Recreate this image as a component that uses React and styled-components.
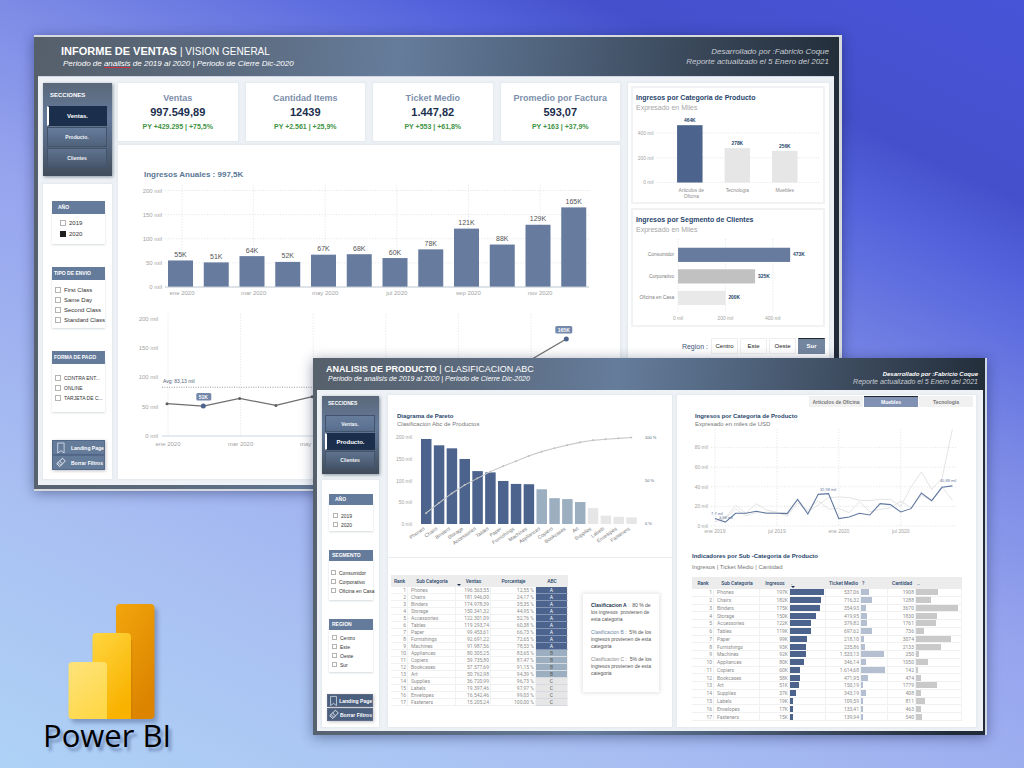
import React from "react";
import styled, { createGlobalStyle, css } from "styled-components";

const Global = createGlobalStyle`
  *, *::before, *::after { box-sizing: border-box; }
  body { margin: 0; font-family: "Liberation Sans", Arial, sans-serif; }
  h1, h2, h3, h4, p, ul, fieldset { margin: 0; padding: 0; border: 0; min-width: 0; }
  button { font-family: inherit; padding: 0; margin: 0; border: 0; cursor: pointer; }
  svg { display: block; }
`;

const c = {
  navy: "#1b2f4d",
  ink: "#27456b",
  bar: "#4b638d",
  slate: "#677b9e",
  mist: "#9bafc1",
  pale: "#e6e6e6",
  grid: "#dcdfe3",
  axis: "#a3a3a3",
};

const Desktop = styled.main`
  position: relative;
  min-height: 100vh;
  overflow: hidden;
  background: linear-gradient(25deg, #aed2f6 0%, #a9bff2 23%, #96a4ee 48%, #7d8be6 62%, #5564dc 77%, #4450cb 84%, #4854d8 100%);
`;

/* ---------- report windows ---------- */

const frame = "linear-gradient(96deg, #56606b 0%, #5b6a7d 22%, #657c9b 43%, #50647d 60%, #3c4a5d 76%, #212c38 96%)";

const Report = styled.article`
  position: absolute;
  background: ${frame};
  box-shadow: 0 2px 12px rgba(20, 30, 70, 0.45);
`;

const SalesReport = styled(Report)`
  top: 35px;
  left: 34px;
  right: 182px;
  padding: 0 5px 4px 4px;
  border: solid #d6dadf;
  border-width: 2px 3px 2px 0;
  background-clip: padding-box;
`;

const ProductReport = styled(Report)`
  top: 358px;
  left: 313px;
  right: 37px;
  padding: 0 2px 4px 4px;
  border-right: 2px solid #cfd6e6;
`;

const Header = styled.header`
  display: flex;
  justify-content: space-between;
  color: #fff;
  height: ${(p) => (p.$small ? 32 : 39)}px;
  padding: ${(p) => (p.$small ? "6px 5px 0 9px" : "8px 5px 0 23px")};
`;

const Title = styled.h1`
  font-size: ${(p) => (p.$small ? 9 : 11)}px;
  line-height: ${(p) => (p.$small ? 10 : 12)}px;
  white-space: nowrap;
  span {
    font-weight: 400;
    font-size: ${(p) => (p.$small ? 9 : 10)}px;
  }
`;

const Period = styled.p`
  font-size: ${(p) => (p.$small ? 7 : 8)}px;
  line-height: ${(p) => (p.$small ? 9 : 12)}px;
  padding-left: 2px;
  font-style: italic;
  white-space: nowrap;
  u { text-decoration: underline #d03040; }
`;

const Credits = styled.p`
  text-align: right;
  font-style: italic;
  white-space: nowrap;
  color: #c9cdd3;
  font-size: ${(p) => (p.$small ? 7 : 8)}px;
  line-height: ${(p) => (p.$small ? 7 : 10)}px;
  padding-top: ${(p) => (p.$small ? 6 : 2)}px;
  b {
    font-size: ${(p) => (p.$small ? 6 : 8)}px;
    font-weight: ${(p) => (p.$small ? 700 : 400)};
    color: ${(p) => (p.$small ? "#fff" : "inherit")};
  }
`;

const SalesBody = styled.div`
  display: grid;
  grid-template-columns: 69px minmax(0, 502fr) minmax(0, 203fr);
  column-gap: 6px;
  background: #eef2f6;
  padding: 6px 5px 6px;
  border-top: 1px solid #cfd8e2;
`;

const ProductBody = styled.div`
  display: grid;
  grid-template-columns: 57px minmax(0, 288fr) minmax(0, 299fr);
  column-gap: 5px;
  background: #eef2f6;
  padding: 5px 7px 4px 5px;
`;

const Side = styled.aside`
  display: flex;
  flex-direction: column;
  gap: ${(p) => (p.$small ? 6 : 8)}px;
  padding-top: ${(p) => (p.$small ? 1 : 0)}px;
`;

const Panel = styled.section`
  background: #fff;
  box-shadow: 0 0 2px 1px #e2e8ee;
`;

/* ---------- navigation ---------- */

const Nav = styled.nav`
  display: flex;
  flex-direction: column;
  gap: 1px;
  background: linear-gradient(180deg, #5a6879 0%, #64799a 38%, #566880 65%, #414c5a 100%);
  box-shadow: 1px 1px 3px rgba(40, 55, 80, 0.5);
  padding: ${(p) => (p.$small ? "4px 4px 6px 3px" : "8px 5px 8px 4px")};
  h2 {
    color: #fff;
    font-size: ${(p) => (p.$small ? 5 : 6)}px;
    line-height: ${(p) => (p.$small ? 7 : 8)}px;
    padding-left: 3px;
    margin-bottom: ${(p) => (p.$small ? 7 : 6)}px;
  }
`;

const NavButton = styled.button`
  height: ${(p) => (p.$small ? 17 : 20)}px;
  color: #f0f3f7;
  font-size: 5px;
  font-weight: 700;
  background: linear-gradient(180deg, rgba(110, 135, 170, 0.45), rgba(70, 90, 120, 0.35));
  border: 1px solid #42536c;
  ${(p) =>
    p.$active &&
    css`
      background: ${c.navy};
      border-color: ${c.navy};
      border-left: 2px solid #fff;
      color: #fff;
      font-size: 6px;
    `}
`;

/* ---------- slicers ---------- */

const Slicers = styled(Panel)`
  flex: 1;
  display: flex;
  flex-direction: column;
  gap: ${(p) => (p.$small ? 19 : 23)}px;
  padding: ${(p) => (p.$small ? "14px 6px 6px 7px" : "17px 7px 9px 9px")};
`;

const Slicer = styled.fieldset`
  box-shadow: 0 1px 2px #d5d9de;
  padding-bottom: ${(p) => p.$bottom}px;
`;

const SlicerHead = styled.legend`
  display: block;
  width: 100%;
  background: #657b9b;
  color: #fff;
  font-weight: 700;
  font-size: 5px;
  padding: 0 0 0 ${(p) => p.$indent}px;
  height: ${(p) => (p.$small ? 11 : 13)}px;
  line-height: ${(p) => (p.$small ? 11 : 13)}px;
  margin-bottom: ${(p) => p.$gap}px;
  white-space: nowrap;
`;

const Option = styled.label`
  display: flex;
  align-items: center;
  gap: 3px;
  height: ${(p) => p.$row}px;
  padding-left: ${(p) => p.$indent}px;
  font-size: ${(p) => p.$size}px;
  color: #333;
  white-space: nowrap;
`;

const Tick = styled.input`
  appearance: none;
  margin: 0;
  flex: none;
  width: ${(p) => (p.$small ? 5 : 6)}px;
  height: ${(p) => (p.$small ? 5 : 6)}px;
  border: 1px solid #b4b4b0;
  background: #fff;
  &:checked { background: #1f1f1f; border-color: #1f1f1f; }
`;

const Actions = styled.div`
  margin: auto 0 0 ${(p) => (p.$small ? -2 : 0)}px;
  display: flex;
  flex-direction: column;
  gap: ${(p) => (p.$small ? 1 : 0)}px;
`;

const Action = styled.button`
  display: flex;
  align-items: center;
  gap: ${(p) => (p.$small ? 1 : 5)}px;
  height: ${(p) => (p.$small ? 13 : 15)}px;
  padding-left: ${(p) => (p.$small ? 1 : 3)}px;
  background: ${(p) => (p.$small ? "#4b5f7f" : "#647b9a")};
  border: 1px solid ${(p) => (p.$small ? "#5d6d87" : "#53698a")};
  color: #fff;
  font-size: 5px;
  font-weight: 700;
  white-space: nowrap;
  box-shadow: 1px 1px 3px rgba(60, 60, 80, 0.3);
`;

const BookmarkIcon = () => (
  <svg width="10" height="12" viewBox="0 0 10 12" fill="none" stroke="#dfe6ef" strokeWidth="0.8">
    <path d="M1.700 1h6.400v10L4.900 8.600 1.700 11z" />
  </svg>
);

const EraserIcon = () => (
  <svg width="10" height="11" viewBox="0 0 11 11" fill="none" stroke="#fff" strokeWidth="0.9">
    <path d="M7.200 0.800 10.200 3.800 4.200 10 0.800 6.800zM4 3.900 7.200 7M2.300 5.600 5.400 8.700" />
  </svg>
);

function Filter({ name, options, checked, small, row = 10, size = 6, indent = 3, headIndent = 2, gap, bottom }) {
  return (
    <Slicer $bottom={bottom}>
      <SlicerHead $small={small} $gap={gap} $indent={headIndent}>{name}</SlicerHead>
      {options.map((o) => (
        <Option key={o} $row={row} $size={size} $indent={indent}>
          <Tick type="checkbox" $small={small} defaultChecked={o === checked} />
          {o}
        </Option>
      ))}
    </Slicer>
  );
}

function Sections({ active, small }) {
  return (
    <Nav $small={small}>
      <h2>SECCIONES</h2>
      {["Ventas.", "Producto.", "Clientes"].map((s) => (
        <NavButton key={s} $small={small} $active={s === active}>{s}</NavButton>
      ))}
    </Nav>
  );
}

function FilterActions({ small }) {
  return (
    <Actions $small={small}>
      <Action $small={small}><BookmarkIcon />Landing Page</Action>
      <Action $small={small}><EraserIcon />Borrar Filtros</Action>
    </Actions>
  );
}

/* ---------- chart helpers ---------- */

const Plot = styled.svg`
  width: 100%;
  height: auto;
  font-family: "Liberation Sans", Arial, sans-serif;
`;

const T = ({ x, y, size = 5, fill = c.axis, anchor = "middle", bold, children, ...rest }) => (
  <text x={x} y={y} dy="0.35em" fontSize={size} fill={fill} textAnchor={anchor} fontWeight={bold ? 700 : 400} {...rest}>
    {children}
  </text>
);

const Dash = ({ x1, y1, x2, y2, stroke = c.grid }) => (
  <line x1={x1} y1={y1} x2={x2} y2={y2} stroke={stroke} strokeWidth="0.8" strokeDasharray="1.2 1.6" />
);

const monthly = [55, 51, 64, 52, 67, 68, 60, 78, 121, 88, 129, 165];
const monthTicks = ["ene 2020", "mar 2020", "may 2020", "jul 2020", "sep 2020", "nov 2020"];

function AnnualBars() {
  const base = 107;
  const k = 0.4825;
  return (
    <Plot viewBox="0 0 502 124" role="img" aria-label="Ingresos Anuales">
      {[0, 50, 100, 150, 200].map((v) => (
        <g key={v}>
          <T x={44} y={base - v * k} size={6} anchor="end">{v} mil</T>
          <Dash x1={47} x2={471} y1={base - v * k} y2={base - v * k} />
        </g>
      ))}
      {monthTicks.map((m, i) => (
        <g key={m}>
          <Dash x1={64 + i * 71.6} x2={64 + i * 71.6} y1={5} y2={base} />
          <T x={64 + i * 71.6} y={base + 6} size={6}>{m}</T>
        </g>
      ))}
      {monthly.map((v, i) => (
        <g key={i}>
          <rect x={50 + i * 35.75} y={base - v * k} width={25} height={v * k} fill={c.slate} />
          <T x={62.5 + i * 35.75} y={base - v * k - 6} size={7} fill="#555">{v}K</T>
        </g>
      ))}
      <line x1={47} x2={471} y1={base} y2={base} stroke="#c2ccd6" />
    </Plot>
  );
}

function MonthlyLine() {
  const base = 132;
  const k = 0.5875;
  const px = (i) => 49 + i * 36.3;
  const py = (v) => base - v * k;
  return (
    <Plot viewBox="0 0 502 156" role="img" aria-label="Ingresos por mes">
      {[0, 50, 100, 150, 200].map((v) => (
        <T key={v} x={40} y={py(v)} size={6} anchor="end">{v} mil</T>
      ))}
      {monthTicks.map((m, i) => (
        <g key={m}>
          <Dash x1={50 + i * 72.6} x2={50 + i * 72.6} y1={10} y2={base} />
          <T x={50 + i * 72.6} y={base + 8} size={6}>{m}</T>
        </g>
      ))}
      <line x1={44} x2={476} y1={base} y2={base} stroke="#cdd8e2" strokeWidth="1.2" />
      <line x1={44} x2={476} y1={py(83)} y2={py(83)} stroke="#9a9a9a" strokeDasharray="1 1.4" />
      <T x={45} y={py(83) - 6} size={5} fill="#4d6078" anchor="start">Avg: 83,13 mil</T>
      <polyline points={monthly.map((v, i) => `${px(i)},${py(v)}`).join(" ")} fill="none" stroke="#6f6f6f" strokeWidth="1.3" />
      {monthly.map((v, i) => {
        const flag = i === 1 || i === 11;
        return (
          <g key={i}>
            <circle cx={px(i)} cy={py(v)} r={flag ? 2.5 : 1.5} fill={flag ? c.bar : "#5e5e5e"} />
            {flag && (
              <>
                <rect x={px(i) - (i === 1 ? 7 : 11)} y={py(v) - 13} width={i === 1 ? 15 : 17} height={7.5} rx={1.5} fill="#7388aa" />
                <T x={px(i) - (i === 1 ? 0 : 2.5)} y={py(v) - 9} size={5} fill="#fff" bold>{v}K</T>
              </>
            )}
          </g>
        );
      })}
    </Plot>
  );
}

function CategoryBars() {
  const base = 71;
  const k = 0.1262;
  const bars = [
    [464, ["Articulos de", "Oficina"], c.bar],
    [278, ["Tecnologia"], c.pale],
    [256, ["Muebles"], c.pale],
  ];
  return (
    <Plot viewBox="0 0 194 91" role="img" aria-label="Ingresos por Categoria de Producto">
      {[0, 200, 400].map((v) => (
        <g key={v}>
          <T x={21} y={base - v * k} anchor="end">{v} mil</T>
          <Dash x1={24} x2={190} y1={base - v * k} y2={base - v * k} />
        </g>
      ))}
      {bars.map(([v, names, fill], i) => (
        <g key={v}>
          <rect x={45 + i * 48.5} y={base - v * k} width={26} height={v * k} fill={fill} />
          <T x={58 + i * 48.5} y={base - v * k - 5} fill={c.ink} bold>{v}K</T>
          {names.map((n, j) => (
            <T key={n} x={(i ? 58 : 59.5) + i * 48.5} y={base + 8 + j * 6} fill="#8c8c8c">{n}</T>
          ))}
        </g>
      ))}
    </Plot>
  );
}

function SegmentBars() {
  const bars = [
    ["Consumidor", 473, c.slate],
    ["Corporativo", 325, "#c1c1c1"],
    ["Oficina en Casa", 200, "#e9e9e9"],
  ];
  return (
    <Plot viewBox="0 0 194 92" role="img" aria-label="Ingresos por Segmento de Clientes">
      {[0, 200, 400].map((v) => (
        <g key={v}>
          <Dash x1={46 + v * 0.242} x2={46 + v * 0.242} y1={4} y2={79} />
          <T x={46 + v * 0.242} y={85}>{v} mil</T>
        </g>
      ))}
      {bars.map(([n, v, fill], i) => (
        <g key={n}>
          <T x={42} y={20 + i * 22} fill="#7d7d7d" anchor="end">{n}</T>
          <rect x={46} y={13 + i * 22} width={v * 0.242} height={14.5} fill={fill} />
          <T x={49 + v * 0.242} y={20 + i * 22} fill={c.ink} anchor="start" bold>{v}K</T>
        </g>
      ))}
    </Plot>
  );
}

const products = [
  ["Phones", "196.563,55", "12,55", "A", 197, "537,06", 1908],
  ["Chairs", "181.946,00", "24,17", "A", 182, "716,32", 1288],
  ["Binders", "174.978,39", "35,35", "A", 175, "354,93", 3670],
  ["Storage", "150.341,32", "44,95", "A", 150, "419,95", 1830],
  ["Accessories", "122.301,09", "52,76", "A", 122, "379,82", 1761],
  ["Tables", "119.293,74", "60,38", "A", 119, "697,62", 736],
  ["Paper", "99.453,61", "66,73", "A", 99, "218,10", 3074],
  ["Furnishings", "92.691,22", "72,65", "A", 93, "235,86", 2133],
  ["Machines", "91.987,56", "78,53", "A", 92, "1.533,13", 250],
  ["Appliances", "80.305,25", "83,65", "B", 80, "346,14", 1050],
  ["Copiers", "59.735,80", "87,47", "B", 60, "1.614,68", 142],
  ["Bookcases", "57.577,69", "91,15", "B", 58, "471,95", 474],
  ["Art", "50.762,98", "94,39", "B", 51, "150,19", 1779],
  ["Supplies", "36.720,99", "96,73", "C", 37, "343,19", 408],
  ["Labels", "19.397,46", "97,97", "C", 19, "109,59", 811],
  ["Envelopes", "16.542,46", "99,03", "C", 17, "133,41", 463],
  ["Fasteners", "15.205,24", "100,00", "C", 15, "139,94", 540],
];
const toNumber = (s) => parseFloat(s.replace(/\./g, "").replace(",", "."));
const tone = { A: c.bar, B: c.mist, C: c.pale };

function Pareto() {
  const base = 96;
  const cx = (i) => 38 + i * 12.83;
  return (
    <Plot viewBox="0 0 284 129" role="img" aria-label="Diagrama de Pareto">
      {[0, 50, 100, 150, 200].map((v) => (
        <T key={v} x={24} y={base - v * 0.4325} anchor="end">{v} mil</T>
      ))}
      {[0, 50, 100].map((v) => (
        <T key={v} x={257} y={base - v * 0.865} size={4} fill="#4d6078" anchor="start">{v} %</T>
      ))}
      {products.map(([n, v, , k], i) => {
        const h = (toNumber(v) / 1000) * 0.4325;
        return (
          <g key={n}>
            <rect x={cx(i) - 5} y={base - h} width={10.5} height={h} fill={tone[k]} />
            <T x={cx(i) - 2} y={base + 4} anchor="end" fill="#777" transform={`rotate(-35 ${cx(i) - 2} ${base + 4})`}>{n}</T>
          </g>
        );
      })}
      <polyline
        points={products.map((p, i) => `${cx(i)},${base - toNumber(p[2]) * 0.865}`).join(" ")}
        fill="none" stroke="#c9c9c9" strokeWidth="1.1"
      />
      {products.map((p, i) => (
        <circle key={p[0]} cx={cx(i)} cy={base - toNumber(p[2]) * 0.865} r="1" fill="#c0c0c0" />
      ))}
    </Plot>
  );
}

const series = {
  a: [6, 8.5, 21, 13, 22.8, 16.3, 14, 10.2, 23.8, 16.3, 25.9, 17.3, 17.7, 13.6, 24.8, 14.6, 17, 18.4, 25.5, 18.4, 31.3, 25.9, 40, 26.2],
  b: [4.4, 7.8, 17.3, 10.5, 13.6, 14, 13.6, 13.6, 27.5, 14.6, 21.4, 29, 29.6, 29, 26.2, 25.9, 27.2, 27.2, 20, 40, 55, 37.4, 48.6, 98.6],
  main: [7.7, 4, 13, 13, 15, 13, 13, 12.6, 27.2, 12.2, 32.3, 33, 7.5, 9.2, 13, 11.2, 22.8, 21.8, 14.3, 17.7, 33.7, 25.9, 39.5, 40.9],
};

function CategoryLines() {
  const base = 98;
  const px = (i) => 38 + i * 10.32;
  const py = (v) => base - v * 0.98;
  const line = (d) => d.map((v, i) => `${px(i)},${py(v)}`).join(" ");
  return (
    <Plot viewBox="0 0 299 111" role="img" aria-label="Ingresos por Categoria de Producto, mensual">
      {[0, 20, 40, 60, 80].map((v) => (
        <g key={v}>
          <T x={31} y={py(v)} anchor="end">{v} mil</T>
          <Dash x1={34} x2={279} y1={py(v)} y2={py(v)} />
        </g>
      ))}
      {["ene 2019", "jul 2019", "ene 2020", "jul 2020"].map((m, i) => (
        <g key={m}>
          <Dash x1={px(i * 6)} x2={px(i * 6)} y1={1} y2={base} />
          <T x={px(i * 6)} y={base + 5}>{m}</T>
        </g>
      ))}
      <polyline points={line(series.a)} fill="none" stroke="#e4e4e4" />
      <polyline points={line(series.b)} fill="none" stroke="#e4e4e4" />
      <polyline points={line(series.main)} fill="none" stroke="#6078a0" strokeWidth="1.1" />
      <T x={40} y={86} size={4} fill={c.slate}>7,7 mil</T>
      <T x={49} y={90} size={4} fill={c.slate}>3,98 mil</T>
      <T x={151} y={62} size={4} fill={c.slate}>32,98 mil</T>
      <T x={271} y={53} size={4} fill={c.slate}>40,88 mil</T>
    </Plot>
  );
}

/* ---------- sales page parts ---------- */

const SalesMain = styled.div`
  display: flex;
  flex-direction: column;
  gap: 4px;
`;

const KpiRow = styled.div`
  display: grid;
  grid-template-columns: repeat(4, 1fr);
  gap: 8px;
`;

const Kpi = styled(Panel)`
  text-align: center;
  height: 58px;
  padding-top: 9px;
  h3 { font-size: 9px; line-height: 13px; color: #7d8fab; }
  strong { display: block; font-size: 11px; line-height: 14px; color: ${c.navy}; }
  p { margin-top: 3px; font-size: 7px; font-weight: 700; line-height: 9px; color: #409443; }
`;

const kpis = [
  ["Ventas", "997.549,89", "PY +429.295 | +75,5%"],
  ["Cantidad Items", "12439", "PY +2.561 | +25,9%"],
  ["Ticket Medio", "1.447,82", "PY +553 | +61,8%"],
  ["Promedio por Factura", "593,07", "PY +163 | +37,9%"],
];

const TrendPanel = styled(Panel)`
  flex: 1;
  padding: 25px 0 19px;
  h3 { padding-left: 26px; font-size: 8px; line-height: 10px; color: #5a7796; }
`;

const SalesAside = styled(Panel)`
  margin-left: 2px;
  padding: 3px 4px 0 3px;
`;

const ChartCard = styled.section`
  border: 2px solid #f1f2f3;
  padding: 5px 0 0;
  margin-bottom: 4px;
  h3 { padding-left: 3px; font-size: 7px; line-height: 10px; color: ${c.ink}; }
  p { padding-left: 3px; font-size: 7px; line-height: 10px; color: #a6a6a6; }
`;

const RegionRow = styled.div`
  display: flex;
  align-items: center;
  justify-content: flex-end;
  gap: 2px;
  padding-top: 7px;
  font-size: 7px;
  color: #45597a;
  span { margin-right: 1px; }
`;

const RegionButton = styled.button`
  width: 27px;
  height: 16px;
  font-size: 6px;
  color: ${(p) => (p.$active ? "#fff" : "#222")};
  background: ${(p) => (p.$active ? "#74869f" : "#fff")};
  border: 1px solid ${(p) => (p.$active ? "#74869f" : "#eeeeee")};
  border-top-color: ${(p) => (p.$active ? "#1f2730" : "#eeeeee")};
  font-weight: ${(p) => (p.$active ? 700 : 400)};
`;

function Sales() {
  return (
    <SalesReport>
      <Header>
        <div>
          <Title>INFORME DE VENTAS <span>| VISION GENERAL</span></Title>
          <Period>Periodo de <u>analisis</u> de 2019 al 2020 | Periodo de Cierre Dic-2020</Period>
        </div>
        <Credits>
          <b>Desarrollado por :Fabricio Coque</b><br />Reporte actualizado el 5 Enero del 2021
        </Credits>
      </Header>
      <SalesBody>
        <Side>
          <Sections active="Ventas." />
          <Slicers>
            <Filter name="AÑO" options={["2019", "2020"]} checked="2020" row={11} size={6} indent={8} headIndent={6} gap={3} bottom={5} />
            <Filter name="TIPO DE ENVIO" options={["First Class", "Same Day", "Second Class", "Standard Class"]} gap={5} bottom={3} />
            <Filter name="FORMA DE PAGO" options={["CONTRA ENT...", "ONLINE", "TARJETA DE C..."]} size={5} gap={9} bottom={9} />
            <FilterActions />
          </Slicers>
        </Side>
        <SalesMain>
          <KpiRow>
            {kpis.map(([name, value, delta]) => (
              <Kpi key={name}>
                <h3>{name}</h3>
                <strong>{value}</strong>
                <p>{delta}</p>
              </Kpi>
            ))}
          </KpiRow>
          <TrendPanel>
            <h3>Ingresos Anuales : 997,5K</h3>
            <AnnualBars />
            <MonthlyLine />
          </TrendPanel>
        </SalesMain>
        <SalesAside>
          <ChartCard>
            <h3>Ingresos por Categoria de Producto</h3>
            <p>Expresado en Miles</p>
            <CategoryBars />
          </ChartCard>
          <ChartCard>
            <h3>Ingresos por Segmento de Clientes</h3>
            <p>Expresado en Miles</p>
            <SegmentBars />
          </ChartCard>
          <RegionRow>
            <span>Region :</span>
            {["Centro", "Este", "Oeste", "Sur"].map((r) => (
              <RegionButton key={r} $active={r === "Sur"}>{r}</RegionButton>
            ))}
          </RegionRow>
        </SalesAside>
      </SalesBody>
    </SalesReport>
  );
}

/* ---------- product page parts ---------- */

const ParetoPanel = styled(Panel)`
  margin-left: 4px;
`;

const ChartTitle = styled.h3`
  font-size: 6px;
  line-height: 8px;
  color: ${c.ink};
  padding-left: ${(p) => p.$left}px;
`;

const ChartNote = styled.p`
  font-size: 6px;
  line-height: 8px;
  color: #777;
  padding-left: ${(p) => p.$left}px;
`;

const ParetoTop = styled.div`
  padding-top: 17px;
  border-bottom: 1px solid #e9ecef;
`;

const ParetoBottom = styled.div`
  display: flex;
  align-items: flex-start;
  justify-content: space-between;
  padding: 17px 13px 20px 3px;
`;

const Table = styled.table`
  table-layout: fixed;
  border-spacing: 0;
  border-collapse: separate;
  font-family: Roboto, "Liberation Sans", sans-serif;
  font-size: 5px;
  color: #8d8d8d;
  th {
    height: 12px;
    padding: 0 1px;
    background: #ececec;
    color: ${c.ink};
    font-weight: 500;
    line-height: 8px;
    white-space: nowrap;
    text-align: center;
  }
  td {
    padding: 0 1px;
    line-height: 6px;
    border-bottom: 1px solid #f1f1f1;
    border-right: 1px solid #f1f1f1;
    text-align: right;
    white-space: nowrap;
  }
  td:nth-child(2) { text-align: left; padding-left: 3px; }
`;

const AbcTable = styled(Table)`
  width: 177px;
`;

const AbcCell = styled.td`
  && {
    text-align: center;
    background: ${(p) => tone[p.$k]};
    color: ${(p) => (p.$k === "A" ? "#fff" : "#5c5c5c")};
    border-bottom-color: ${(p) => (p.$k === "A" ? "#8496b5" : "#d5dbe0")};
  }
`;

const BarHead = styled.th`
  && { text-align: left; }
`;

const SortHead = styled.th`
  position: relative;
  &&  { text-align: ${(p) => p.$align || "center"}; }
  &::after {
    content: "";
    position: absolute;
    left: 1px;
    bottom: 1px;
    border: 2px solid transparent;
    border-top-color: ${c.navy};
    border-bottom-width: 0;
  }
`;

const Legend = styled.div`
  width: 76px;
  margin-top: 19px;
  padding: 8px 0 15px 8px;
  background: #fff;
  box-shadow: 0 0 4px 1px #e2e2e2;
  font-size: 5px;
  line-height: 7px;
  color: #555;
  white-space: nowrap;
  p + p { margin-top: 6px; }
`;

const Grade = styled.b`
  color: ${(p) => p.$tone};
  font-weight: ${(p) => (p.$strong ? 700 : 400)};
`;

const MetricsPanel = styled(Panel)`
  padding: 1px 0 6px;
`;

const Tabs = styled.div`
  display: flex;
  justify-content: flex-end;
  gap: 1px;
  padding-right: 3px;
  margin-bottom: 5px;
`;

const Tab = styled.button`
  width: 54px;
  height: 11px;
  font-size: 5px;
  font-weight: 700;
  color: ${(p) => (p.$active ? "#fff" : "#777")};
  background: ${(p) => (p.$active ? "#8191b3" : "#f1f1f1")};
  border-top: 1px solid ${(p) => (p.$active ? "#1f2730" : "#f1f1f1")};
`;

const MetricsTable = styled(Table)`
  width: 270px;
  height: 144px;
  margin: 6px 0 0 15px;
`;

const Indicators = styled.div`
  padding-top: 13px;
  p { margin-top: 3px; }
`;

const BarCell = styled.td`
  && { padding: 0; }
  div {
    height: 6px;
    background: ${(p) => p.$tone};
  }
`;

function Cols({ widths }) {
  return (
    <colgroup>
      {widths.map((w, i) => <col key={i} style={{ width: w }} />)}
    </colgroup>
  );
}

function Products() {
  return (
    <ProductReport>
      <Header $small>
        <div>
          <Title $small>ANALISIS DE PRODUCTO <span>| CLASIFICACION ABC</span></Title>
          <Period $small>Periodo de analisis de 2019 al 2020 | Periodo de Cierre Dic-2020</Period>
        </div>
        <Credits $small>
          <b>Desarrollado por :Fabricio Coque</b><br />Reporte actualizado el 5 Enero del 2021
        </Credits>
      </Header>
      <ProductBody>
        <Side $small>
          <Sections active="Producto." small />
          <Slicers $small>
            <Filter small name="AÑO" options={["2019", "2020"]} row={9} size={5} indent={4} headIndent={6} gap={6} bottom={2} />
            <Filter small name="SEGMENTO" options={["Consumidor", "Corporativo", "Oficina en Casa"]} row={9} size={5} indent={2} headIndent={3} gap={7} bottom={5} />
            <Filter small name="REGION" options={["Centro", "Este", "Oeste", "Sur"]} row={9} size={5} indent={3} headIndent={3} gap={3} bottom={3} />
            <FilterActions small />
          </Slicers>
        </Side>
        <ParetoPanel>
          <ParetoTop>
            <ChartTitle $left={9}>Diagrama de Pareto</ChartTitle>
            <ChartNote $left={9}>Clasificacion Abc de Productos</ChartNote>
            <Pareto />
          </ParetoTop>
          <ParetoBottom>
            <AbcTable>
              <Cols widths={[17, 48, 35, 45, 32]} />
              <thead>
                <tr><th>Rank</th><th>Sub Categoria</th><SortHead>Ventas</SortHead><th>Porcentaje</th><th>ABC</th></tr>
              </thead>
              <tbody>
                {products.map(([n, v, p, k], i) => (
                  <tr key={n}>
                    <td>{i + 1}</td><td>{n}</td><td>{v}</td><td>{p} %</td><AbcCell $k={k}>{k}</AbcCell>
                  </tr>
                ))}
              </tbody>
            </AbcTable>
            <Legend>
              <p><Grade $tone={c.navy} $strong>Clasificacion A</Grade> : &nbsp;80 % de<br />los ingresos &nbsp;provienen de<br />esta categoria</p>
              <p><Grade $tone="#6f88a8">Clasificacion B</Grade> : &nbsp;5% de los<br />ingresos provienen de esta<br />categoria</p>
              <p><Grade $tone="#8a8a8a">Clasificacion C</Grade> : &nbsp;5% de los<br />ingresos provienen de esta<br />categoria</p>
            </Legend>
          </ParetoBottom>
        </ParetoPanel>
        <MetricsPanel>
          <Tabs>
            <Tab>Articulos de Oficina</Tab><Tab $active>Muebles</Tab><Tab>Tecnologia</Tab>
          </Tabs>
          <ChartTitle $left={18}>Ingresos por Categoria de Producto</ChartTitle>
          <ChartNote $left={18}>Expresado en miles de USD</ChartNote>
          <CategoryLines />
          <Indicators>
            <ChartTitle $left={15}>Indicadores por Sub -Categoria de Producto</ChartTitle>
            <ChartNote $left={15}>Ingresos | Ticket Medio | Cantidad</ChartNote>
          </Indicators>
          <MetricsTable>
            <Cols widths={[22, 46, 30, 36, 35, 27, 28, 46]} />
            <thead>
              <tr>
                <th>Rank</th><th>Sub Categoria</th><th>Ingresos</th><SortHead $align="left">.</SortHead>
                <th>Ticket Medio</th><BarHead>?</BarHead><th>Cantidad</th><BarHead>..</BarHead>
              </tr>
            </thead>
            <tbody>
              {products.map(([n, , , , k, ticket, qty], i) => (
                <tr key={n}>
                  <td>{i + 1}</td><td>{n}</td><td>{k}K</td>
                  <BarCell $tone={c.bar}><div style={{ width: `${(k / 197) * 97}%` }} /></BarCell>
                  <td>{ticket}</td>
                  <BarCell $tone="#b5bfd2"><div style={{ width: `${(toNumber(ticket) / 1615) * 94}%` }} /></BarCell>
                  <td>{qty}</td>
                  <BarCell $tone="#c9c9c9"><div style={{ width: `${(qty / 3670) * 94}%` }} /></BarCell>
                </tr>
              ))}
            </tbody>
          </MetricsTable>
        </MetricsPanel>
      </ProductBody>
    </ProductReport>
  );
}

/* ---------- logo ---------- */

const Brand = styled.figure`
  position: absolute;
  left: 43px;
  top: 600px;
  margin: 0;
  svg { margin-left: 21px; overflow: visible; filter: drop-shadow(3px 4px 2px rgba(40, 60, 110, 0.35)); }
  figcaption {
    font: 400 31px/32px "Open Sans", "Noto Sans", sans-serif;
    color: #000;
    text-shadow: 3px 4px 3px rgba(40, 60, 110, 0.4);
    white-space: nowrap;
  }
`;

function PowerBi() {
  return (
    <Brand>
      <svg width="96" height="119" viewBox="0 0 96 119" aria-hidden="true">
        <defs>
          <linearGradient id="tall" x1="0" y1="0" x2="0.5" y2="1">
            <stop offset="0" stopColor="#f2a60c" /><stop offset="1" stopColor="#dc8400" />
          </linearGradient>
          <linearGradient id="mid" x1="0" y1="0" x2="0.5" y2="1">
            <stop offset="0" stopColor="#ffd640" /><stop offset="1" stopColor="#f9b200" />
          </linearGradient>
          <linearGradient id="low" x1="0" y1="0" x2="0.5" y2="1">
            <stop offset="0" stopColor="#fde37c" /><stop offset="1" stopColor="#ffd84a" />
          </linearGradient>
        </defs>
        <path d="M52 8a4 4 0 0 1 4-4h30.500a4 4 0 0 1 4 4v107a4 4 0 0 1-4 4H52z" fill="url(#tall)" />
        <path d="M66.700 40v79h1.600V40z" fill="#b86f00" opacity="0.35" />
        <path d="M28.500 37a4 4 0 0 1 4-4H63a4 4 0 0 1 4 4v82H28.500z" fill="url(#mid)" />
        <path d="M4.500 66a4 4 0 0 1 4-4H39a4 4 0 0 1 4 4v53H8.500a4 4 0 0 1-4-4z" fill="url(#low)" />
      </svg>
      <figcaption>Power BI</figcaption>
    </Brand>
  );
}

export default function App() {
  return (
    <>
      <Global />
      <Desktop>
        <PowerBi />
        <Sales />
        <Products />
      </Desktop>
    </>
  );
}
